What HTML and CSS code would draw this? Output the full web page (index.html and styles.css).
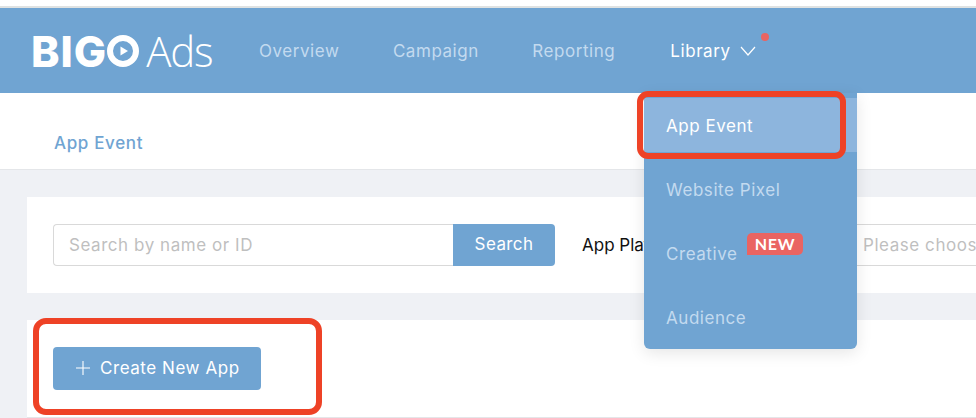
FILE: index.html
```html
<!DOCTYPE html>
<html lang="en">
<head>
<meta charset="utf-8">
<title>BIGO Ads</title>
<link rel="stylesheet" href="styles.css">
</head>
<body>
<div class="top-strip"></div>
<header class="header">
  <div class="logo">
    <span class="logo-big">BIG</span>
    <svg class="logo-o" width="32" height="32" viewBox="0 0 32 32"><circle cx="16" cy="16" r="13" fill="none" stroke="#fff" stroke-width="6"/><path d="M13.5 11.5v9l7.5-4.5z" fill="#fff"/></svg>
    <span class="logo-ads">Ads</span>
  </div>
  <nav class="nav">
    <a class="nav-item">Overview</a>
    <a class="nav-item">Campaign</a>
    <a class="nav-item">Reporting</a>
    <a class="nav-item nav-active">Library
      <svg class="chev" width="16" height="10" viewBox="0 0 16 10"><path d="M1 1l7 8 7-8" fill="none" stroke="#fff" stroke-width="1.2"/></svg>
    </a>
  </nav>
</header>
<div class="subnav"><span class="subnav-item">App Event</span></div>
<main class="content">
  <section class="card filter">
    <div class="search">
      <div class="search-input">Search by name or ID</div>
      <div class="search-btn">Search</div>
    </div>
    <span class="filter-label">App Platform</span>
    <div class="select">Please choose</div>
  </section>
  <section class="card action">
    <div class="create-btn">
      <svg width="16" height="16" viewBox="0 0 16 16"><path d="M8 1v14M1 8h14" stroke="#fff" stroke-width="1.1"/></svg>
      <span>Create New App</span>
    </div>
  </section>
</main>
<div class="menu">
  <div class="menu-item menu-current">App Event</div>
  <div class="menu-item">Website Pixel</div>
  <div class="menu-item">Creative<span class="new-badge">NEW</span></div>
  <div class="menu-item">Audience</div>
</div>
<span class="dot"></span>
<div class="mark mark-menu"></div>
<div class="mark mark-create"></div>
</body>
</html>
```
FILE: styles.css
```css
* { box-sizing: border-box; }
html, body { margin: 0; padding: 0; }
body {
  width: 976px;
  height: 418px;
  overflow: hidden;
  position: relative;
  background: #eff1f5;
  font-family: Inter, "Liberation Sans", sans-serif;
  font-size: 17px;
}
.top-strip { height: 8px; background: #fff; border-bottom: 2px solid #dfe2e2; }
.header {
  height: 85px;
  background: #70a4d2;
  display: flex;
  align-items: center;
  padding-left: 31px;
}
.logo { display: flex; align-items: center; width: 228px; color: #fff; height: 34px; flex: none; }
.logo-big { font-weight: 800; font-size: 43px; letter-spacing: 1px; line-height: 34px; }
.logo-ads { font-family: "Open Sans", sans-serif; font-size: 42px; font-weight: 300; margin-left: 7px; line-height: 34px; letter-spacing: -1.2px; }
.nav { display: flex; gap: 53.5px; }
.nav-item { color: #c3daef; font-size: 17px; font-weight: 400; letter-spacing: .55px; white-space: nowrap; }
.nav-active { color: #fff; display: flex; align-items: center; gap: 9px; margin-left: 1.5px; }
.subnav {
  height: 77px;
  background: #fff;
  border-bottom: 1px solid #e4e6e9;
  display: flex;
  align-items: center;
  padding: 24px 0 0 54px;
}
.subnav-item { color: #70a4d2; font-size: 17px; font-weight: 500; letter-spacing: .65px; }
.content { padding: 27px 0 0 27px; display: flex; flex-direction: column; gap: 27px; }
.card { background: #fff; }
.filter { height: 96px; display: flex; align-items: center; padding-left: 26px; white-space: nowrap; overflow: hidden; }
.search { display: flex; flex: none; width: 502px; height: 42px; }
.search-input {
  flex: 1;
  border: 1px solid #d9d9d9;
  border-right: 0;
  border-radius: 4px 0 0 4px;
  padding-left: 15px;
  line-height: 40px;
  color: #bfbfbf;
  font-weight: 400;
  letter-spacing: .55px;
}
.search-btn {
  width: 102px;
  background: #70a4d2;
  color: #fff;
  border-radius: 0 4px 4px 0;
  text-align: center;
  line-height: 41px;
  font-weight: 400;
  letter-spacing: .4px;
}
.filter-label { flex: none; margin-left: 27px; color: #111; font-weight: 400; width: 268px; font-size: 17px; }
.select {
  flex: none;
  width: 126px;
  height: 42px;
  border: 1px solid #d9d9d9;
  border-right: 0;
  padding-left: 12px;
  line-height: 40px;
  color: #bfbfbf;
  font-weight: 400;
  letter-spacing: .55px;
  overflow: hidden;
}
.action { height: 98px; padding: 27px 0 0 26px; border-bottom: 1px solid #e4e6e9; }
.create-btn {
  width: 208px;
  height: 43px;
  background: #70a4d2;
  color: #fff;
  border-radius: 4px;
  display: flex;
  align-items: center;
  gap: 9px;
  padding: 0 0 2px 22px;
  font-weight: 400;
  letter-spacing: .55px;
}
.menu {
  position: absolute;
  left: 644px;
  top: 93px;
  width: 213px;
  height: 256px;
  padding: 5px 0;
  display: flex;
  flex-direction: column;
  gap: 10px;
  background: #70a4d2;
  border-radius: 0 0 6px 6px;
  box-shadow: 0 4px 16px rgba(0, 0, 0, .1);
}
.menu-item {
  height: 54px;
  padding-left: 22px;
  line-height: 56px;
  color: #c3daef;
  font-weight: 400;
  letter-spacing: .55px;
}
.menu-current { background: #8db5dd; color: #fff; }
.new-badge {
  position: absolute;
  left: 103px;
  top: 140px;
  width: 56px;
  height: 22px;
  background: #ea6462;
  border-radius: 5px 5px 5px 0;
  color: #fff;
  font-family: Lato, sans-serif;
  font-size: 16px;
  font-weight: 700;
  line-height: 21px;
  text-align: center;
  letter-spacing: .8px;
}
.dot {
  position: absolute;
  left: 761px;
  top: 33px;
  width: 8px;
  height: 8px;
  border-radius: 50%;
  background: #ea6462;
}
.mark { position: absolute; border: 6px solid #ee4226; }
.mark-menu { left: 637px; top: 91px; width: 209px; height: 68px; border-radius: 11px; }
.mark-create { left: 33px; top: 318px; width: 289px; height: 97px; border-radius: 13px; }
```
